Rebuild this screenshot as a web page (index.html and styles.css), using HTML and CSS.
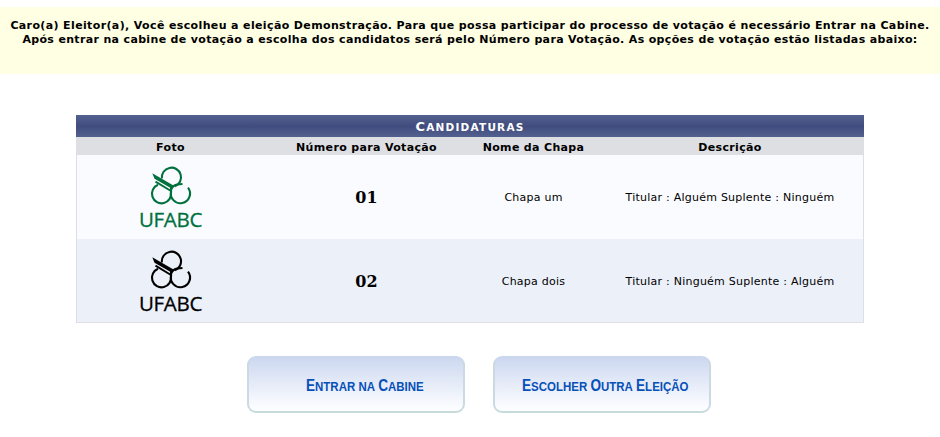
FILE: index.html
```html
<!DOCTYPE html>
<html lang="pt-BR">
<head>
<meta charset="utf-8">
<title>Candidaturas</title>
<link rel="stylesheet" href="styles.css">
</head>
<body>
<svg class="defs" width="0" height="0">
  <symbol id="emblem" viewBox="1 0 80 48">
    <g fill="none" stroke="currentColor" stroke-width="2.100">
      <path d="M31.900 18.500A9.600 9.600 0 1 1 45 26.200"/>
      <path d="M28 24.800A9.600 9.600 0 1 0 41 32L41 27"/>
      <path d="M41.200 31A9.600 9.600 0 1 0 58 27.700"/>
      <path d="M41 30Q42.500 25.500 47 24.500L52.500 24"/>
    </g>
    <path d="M22.300 13.300L43.500 25.500L42 28.800L24.500 18.800Z" fill="currentColor"/>
    <path d="M25.500 21.600L41 31" stroke="currentColor" stroke-width="1.900"/>
  </symbol>
</svg>
<div class="notice">
  <p class="line1">Caro(a) Eleitor(a), Você escolheu a eleição Demonstração. Para que possa participar do processo de votação é necessário Entrar na Cabine.</p>
  <p class="line2">Após entrar na cabine de votação a escolha dos candidatos será pelo Número para Votação. As opções de votação estão listadas abaixo:</p>
</div>
<table class="list">
  <caption>Candidaturas</caption>
  <thead>
    <tr><th class="photo">Foto</th><th class="number">Número para Votação</th><th class="name">Nome da Chapa</th><th class="desc">Descrição</th></tr>
  </thead>
  <tbody>
    <tr>
      <td><div class="logo green"><svg class="mark"><use href="#emblem"/></svg><span class="brand">UFABC</span></div></td>
      <td class="num">01</td><td>Chapa um</td><td>Titular : Alguém Suplente : Ninguém</td>
    </tr>
    <tr>
      <td><div class="logo"><svg class="mark"><use href="#emblem"/></svg><span class="brand">UFABC</span></div></td>
      <td class="num">02</td><td>Chapa dois</td><td>Titular : Ninguém Suplente : Alguém</td>
    </tr>
  </tbody>
</table>
<div class="actions">
  <button class="btn enter"><span class="label"><span class="word">Entrar</span> <span class="word small">na</span> <span class="word">Cabine</span></span></button>
  <button class="btn other"><span class="label"><span class="word">Escolher</span> <span class="word">Outra</span> <span class="word">Eleição</span></span></button>
</div>
</body>
</html>
```

FILE: styles.css
```css
* { box-sizing: border-box; }
body {
  margin: 0;
  background: #fff;
  color: #000;
  font: 11px/14px "DejaVu Sans", sans-serif;
}
.defs { display: block; }
.notice {
  height: 67px;
  margin-top: 7px;
  padding-top: 12px;
  background: #ffffe4;
  font-weight: bold;
  text-align: center;
  white-space: nowrap;
}
.notice p { margin: 0; }
.line1 { letter-spacing: .37px; }
.line2 { letter-spacing: .34px; }
.list {
  width: 788px;
  margin: 41px auto 0;
  border-collapse: separate;
  border-spacing: 0;
  table-layout: fixed;
  text-align: center;
}
.list caption {
  height: 22px;
  background: linear-gradient(#53618f, #404c7e 52%, #53618f);
  color: #fff;
  font-size: 10.5px;
  font-weight: bold;
  text-transform: uppercase;
  letter-spacing: 1.2px;
  line-height: 23px;
}
.list caption::first-letter { font-size: 13px; }
th, td { padding: 0; }
th {
  height: 18px;
  padding-top: 3px;
  background: #dedfe3;
  letter-spacing: .34px;
  line-height: 15px;
}
.photo { width: 188px; padding-left: 1px; }
.number { width: 205px; }
.name { width: 129px; }
.desc { padding-right: 2px; }
tbody td { height: 84px; padding-top: 1px; background: #fafbfe; letter-spacing: .24px; }
tbody tr:last-child td { padding-top: 2px; background: #ecf0f9; border-bottom: 1px solid #dedfe3; }
tbody tr td:first-child,
tbody tr:last-child td:first-child { border-left: 1px solid #dedfe3; padding-top: 0; }
tbody td:last-child { border-right: 1px solid #dedfe3; padding-right: 1px; }
tbody .num { font: bold 16px "DejaVu Serif", serif; letter-spacing: 0; }
.logo {
  display: flex;
  flex-direction: column;
  align-items: center;
  width: 80px;
  height: 74px;
  margin: 0 auto;
  color: #000;
}
.green { color: #00703c; }
.mark { width: 80px; height: 48px; flex: none; }
.brand {
  margin-top: -1px;
  font: 20.5px/24px "Open Sans", sans-serif;
  letter-spacing: -.3px;
  -webkit-text-stroke: .3px;
}
.actions {
  display: flex;
  gap: 28px;
  margin: 33px 0 0 247px;
}
.btn {
  width: 218px;
  height: 57px;
  padding: 3px 0 0 57px;
  border: 2px solid;
  border-color: #cbd7ee #cbd9e2 #c8dbdb #cbd9e2;
  border-radius: 9px;
  background: linear-gradient(#cdd8f0, #fcfdff 95%);
  color: #0650b8;
  font: bold 13.5px/20px "Liberation Sans", sans-serif;
  text-align: left;
  text-transform: uppercase;
  white-space: nowrap;
}
.label {
  display: inline-block;
  transform: scaleX(.85);
  transform-origin: left;
}
.word { display: inline-block; }
.word::first-letter { font-size: 16px; }
.small::first-letter { font-size: 13.5px; }
.other { padding-left: 27px; }
```
